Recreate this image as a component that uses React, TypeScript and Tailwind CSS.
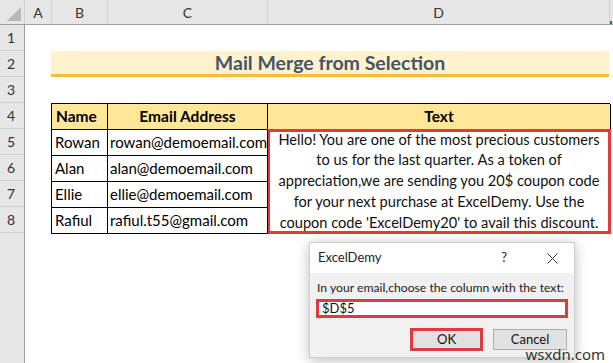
import React from "react";

const rowNums = [1, 2, 3, 4, 5, 6, 7, 8];

const people = [
  { name: "Rowan", email: "rowan@demoemail.com" },
  { name: "Alan", email: "alan@demoemail.com" },
  { name: "Ellie", email: "ellie@demoemail.com" },
  { name: "Rafiul", email: "rafiul.t55@gmail.com" },
];

const rowStarts = ["row-start-2", "row-start-3", "row-start-4", "row-start-5"];

const textLines = [
  "Hello! You are one of the most precious customers",
  "to us for the last quarter. As a token of",
  "appreciation,we are sending you 20$ coupon code",
  "for your next purchase at ExcelDemy. Use the",
  "coupon code 'ExcelDemy20' to avail this discount.",
];

function ColHead({ w, label }: { w: string; label?: string }) {
  return (
    <div className={`${w} h-full flex items-center justify-center border-r border-[#d0d0d0] text-[14px] text-[#333]`}>
      {label}
    </div>
  );
}

function Dialog() {
  return (
    <div className="absolute left-[309px] top-[242px] w-[266px] h-[116px] bg-[#f0f0f0] border border-[#cfcfcf] shadow-[0_2px_12px_rgba(0,0,0,0.28)] font-['Lato',sans-serif]">
      <div className="h-[30px] bg-white flex items-center pl-[8px] text-[13px] text-[#222]">
        <span>ExcelDemy</span>
        <span className="ml-auto mr-[40px] text-[13px]">?</span>
        <svg width="11" height="11" viewBox="0 0 11 11" className="mr-[16px]">
          <path d="M0.5 0.5 L10.5 10.5 M10.5 0.5 L0.5 10.5" stroke="#333" strokeWidth="1" />
        </svg>
      </div>
      <div className="px-[6px] pt-[7px]">
        <div className="text-[12.2px] text-[#222] leading-[16px] pl-[1px] whitespace-nowrap">
          In your email,choose the column with the text:
        </div>
        <div className="mt-[3px] h-[19px] bg-white border-[3px] border-[#e0393e] flex items-center pl-[3px] text-[13px] text-[#111]">
          $D$5
        </div>
        <div className="mt-[10px] flex justify-end gap-[10px] pr-[1px]">
          <div className="w-[73px] h-[23px] bg-[#e1e1e1] border-[3px] border-[#e0393e] flex items-center justify-center text-[13px] text-[#111]">
            OK
          </div>
          <div className="w-[74px] h-[21px] mt-[1px] bg-[#e1e1e1] border border-[#adadad] flex items-center justify-center text-[13px] text-[#111]">
            Cancel
          </div>
        </div>
      </div>
    </div>
  );
}

export default function App() {
  return (
    <div className="relative w-[613px] h-[363px] overflow-hidden bg-white font-['Lato',sans-serif]">
      {/* column headers */}
      <div className="flex h-[25px] bg-[#e6e6e6] border-b border-[#9e9e9e]">
        <div className="w-[25px] h-full flex items-end justify-end pr-[3px] pb-[3px] border-r border-[#d0d0d0]">
          <svg width="14" height="14" viewBox="0 0 14 14">
            <polygon points="14,0 14,14 0,14" fill="#b8b8b8" />
          </svg>
        </div>
        <ColHead w="w-[27px]" label="A" />
        <ColHead w="w-[56px]" label="B" />
        <ColHead w="w-[160px]" label="C" />
        <ColHead w="w-[342px]" label="D" />
        <div className="flex-1 h-full flex flex-col justify-end">
          <div className="h-[3px] w-[2px] bg-[#217346]" />
        </div>
      </div>

      <div className="flex">
        {/* row headers */}
        <div className="w-[25px] h-[338px] bg-[#e6e6e6] border-r border-[#9e9e9e] flex flex-col">
          {rowNums.map((n) => (
            <div
              key={n}
              className="h-[26px] flex items-center justify-center pr-[2px] border-b border-[#d0d0d0] text-[14px] text-[#333]"
            >
              {n}
            </div>
          ))}
        </div>

        {/* sheet */}
        <div className="flex-1 pl-[26px] flex flex-col">
          <div className="h-[26px]" />
          <div className="h-[26px] w-[558px] bg-[#fff2cc] border-b-[3px] border-[#f2c12e] flex items-center justify-center text-[19.5px] font-bold text-[#44546a]">
            Mail Merge from Selection
          </div>
          <div className="h-[26px]" />

          <div className="grid grid-cols-[56px_160px_343px] grid-rows-[26px_26px_26px_26px_26px] w-[559px] border-l border-t border-black text-[15px] text-black">
            <div className="bg-[#ffe699] border-r border-b border-black flex items-center pl-[4px] font-bold text-[15.5px]">
              Name
            </div>
            <div className="bg-[#ffe699] border-r border-b border-black flex items-center justify-center font-bold text-[15.5px]">
              Email Address
            </div>
            <div className="bg-[#ffe699] border-r border-b border-black flex items-center justify-center font-bold text-[15.5px]">
              Text
            </div>

            <div className="col-start-3 row-start-2 row-span-4 border-[3px] border-[#e0393e] -ml-[1px] -mt-[1px] flex flex-col items-center justify-center text-center leading-[20.7px] text-[14.6px] text-[#111] whitespace-nowrap">
              {textLines.map((l) => (
                <span key={l}>{l}</span>
              ))}
            </div>

            {people.map((p, i) => (
              <React.Fragment key={p.name}>
                <div className={`col-start-1 border-r border-b border-black flex items-center pl-[3px] ${rowStarts[i]}`}>
                  {p.name}
                </div>
                <div
                  className={`col-start-2 border-r border-b border-black flex items-center pl-[2px] whitespace-nowrap ${rowStarts[i]}`}
                >
                  {p.email}
                </div>
              </React.Fragment>
            ))}
          </div>
        </div>
      </div>

      <Dialog />

      <div className="absolute right-[8px] top-[345px] text-[15px] text-[#333] font-['Noto_Sans',sans-serif] leading-[18px]">
        wsxdn.com
      </div>
    </div>
  );
}
